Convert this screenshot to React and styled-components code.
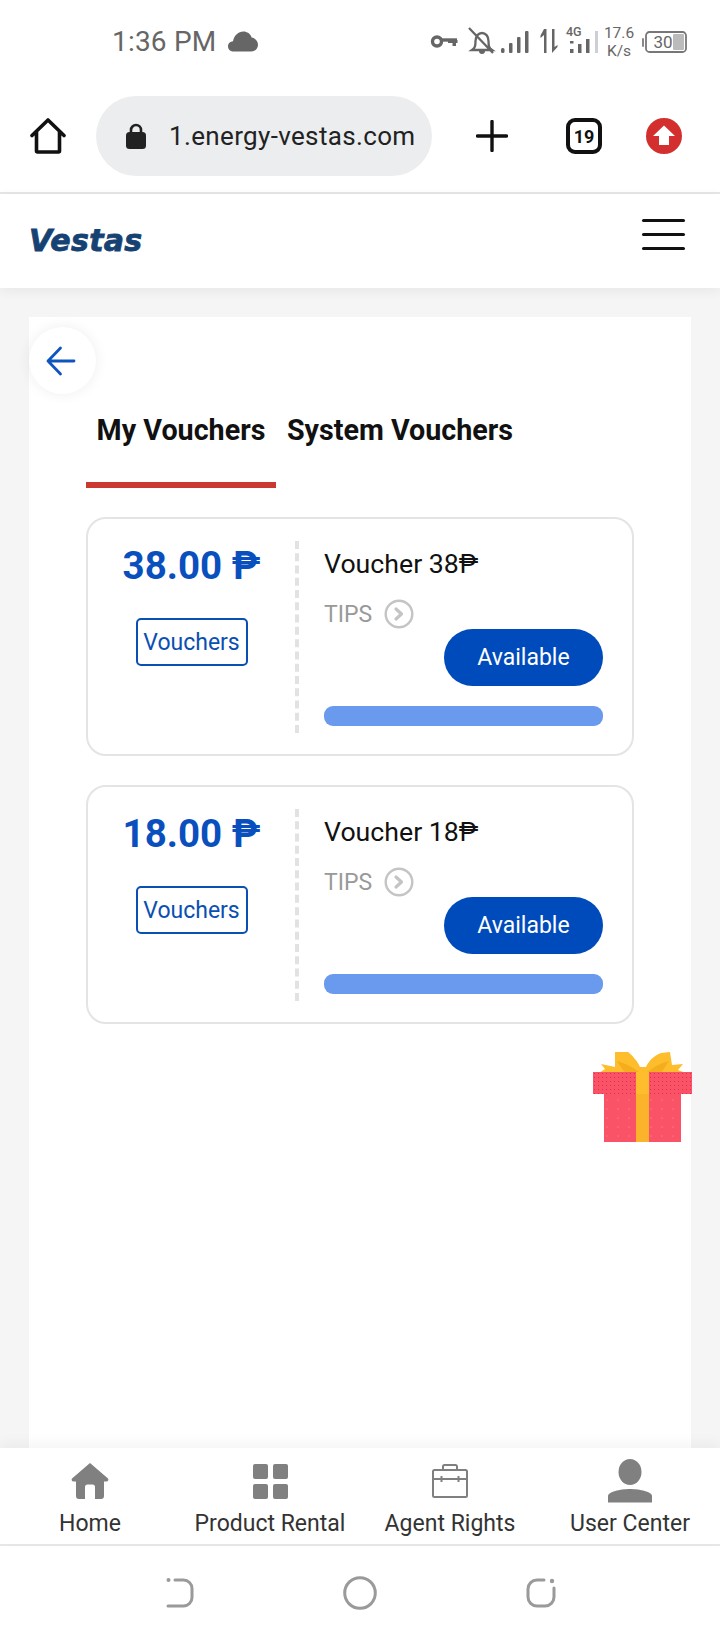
import React from "react";
import styled, { createGlobalStyle } from "styled-components";

const GlobalStyle = createGlobalStyle`
  html, body {
    margin: 0;
    padding: 0;
    background: #fff;
    font-family: Roboto, "Liberation Sans", sans-serif;
  }
  * { box-sizing: border-box; }
`;

const Page = styled.div`
  width: 720px;
  height: 1640px;
  display: flex;
  flex-direction: column;
  overflow: hidden;
  background: #fff;
`;

const StatusBar = styled.div`
  height: 96px;
  flex: none;
  display: flex;
  align-items: center;
  justify-content: space-between;
  padding: 0 33px 13px 112px;
  color: #666;
`;
const StatusLeft = styled.div`
  display: flex;
  align-items: center;
  gap: 12px;
`;
const Clock = styled.span`
  font-size: 28px;
  line-height: 34px;
  letter-spacing: 0.2px;
`;
const StatusRight = styled.div`
  display: flex;
  align-items: center;
`;
const Speed = styled.div`
  font-size: 15.5px;
  line-height: 18px;
  text-align: center;
  width: 32px;
  margin-right: 7px;
  color: #666;
`;
const Battery = styled.div`
  width: 45px;
  height: 22px;
  position: relative;
  display: flex;
  align-items: center;
  justify-content: center;
`;
const BatteryLabel = styled.span`
  font-size: 17px;
  margin-left: -3px;
  color: #666;
  position: relative;
`;
const BatteryOutline = styled.svg`
  position: absolute;
  inset: 0;
`;

const Toolbar = styled.div`
  height: 98px;
  flex: none;
  display: flex;
  align-items: flex-start;
  border-bottom: 2px solid #e6e6e6;
`;
const ToolSlot = styled.div`
  width: ${(p) => p.$w}px;
  height: 80px;
  flex: none;
  display: flex;
  align-items: center;
  justify-content: center;
`;
const UrlPill = styled.div`
  width: 336px;
  height: 80px;
  flex: none;
  border-radius: 40px;
  background: #ebedef;
  display: flex;
  align-items: center;
  padding-left: 30px;
  gap: 23px;
`;
const UrlText = styled.span`
  font-size: 26px;
  color: #222;
  letter-spacing: 0.35px;
  white-space: nowrap;
`;
const TabCount = styled.div`
  width: 36px;
  height: 36px;
  border: 4px solid #111;
  border-radius: 9px;
  display: flex;
  align-items: center;
  justify-content: center;
  font-size: 18px;
  font-weight: 700;
  color: #111;
`;

const Header = styled.header`
  height: 94px;
  flex: none;
  display: flex;
  align-items: center;
  justify-content: space-between;
  padding: 0 35px 0 29px;
  background: #fff;
  box-shadow: 0 3px 12px rgba(0, 0, 0, 0.06);
  position: relative;
  z-index: 2;
`;
const Logo = styled.span`
  font-family: "DejaVu Sans", sans-serif;
  font-style: italic;
  font-weight: 700;
  font-size: 30px;
  line-height: 36px;
  letter-spacing: 0.3px;
  color: #164273;
  -webkit-text-stroke: 0.8px #164273;
`;
const Burger = styled.div`
  width: 43px;
  display: flex;
  flex-direction: column;
  gap: 11px;
  margin-top: -14px;
  span {
    display: block;
    height: 3px;
    border-radius: 2px;
    background: #111;
  }
`;

const Main = styled.main`
  flex: 1;
  min-height: 0;
  background: #f5f5f5;
  padding: 29px 29px 0;
  overflow: hidden;
`;
const Panel = styled.section`
  position: relative;
  width: 662px;
  height: 100%;
  background: #fff;
  padding: 63px 57px 0;
`;
const BackButton = styled.div`
  position: absolute;
  left: 0;
  top: 10px;
  width: 67px;
  height: 67px;
  border-radius: 50%;
  background: #fff;
  box-shadow: 0 0 14px rgba(0, 0, 0, 0.07);
  display: flex;
  align-items: center;
  justify-content: center;
  padding-right: 4px;
`;
const Tabs = styled.div`
  display: flex;
`;
const Tab = styled.div`
  width: ${(p) => p.$w}px;
  height: 108px;
  line-height: 100px;
  font-size: 28.7px;
  font-weight: 700;
  color: #111;
  text-align: center;
  white-space: nowrap;
  border-bottom: 6px solid ${(p) => (p.$active ? "#cb3832" : "transparent")};
`;
const CardList = styled.div`
  margin-top: 29px;
  display: flex;
  flex-direction: column;
  gap: 29px;
`;
const Card = styled.article`
  width: 548px;
  height: 239px;
  border: 2px solid #e4e4e4;
  border-radius: 20px;
  padding: 22px 0 21px;
  display: flex;
  background: #fff;
`;
const Amount = styled.div`
  width: 207px;
  flex: none;
  display: flex;
  flex-direction: column;
  align-items: center;
`;
const Price = styled.div`
  font-size: 38.5px;
  line-height: 44px;
  font-weight: 700;
  color: #0a4fbe;
  white-space: nowrap;
  margin-top: 3px;
`;
const Tag = styled.div`
  margin-top: 30px;
  width: 112px;
  height: 48px;
  border: 2px solid #0a4fb2;
  border-radius: 5px;
  display: flex;
  align-items: center;
  justify-content: center;
  font-size: 23px;
  color: #0a4fb2;
`;
const Details = styled.div`
  flex: 1;
  border-left: 4px dashed #e2e2e2;
  padding: 0 29px 0 25px;
  display: flex;
  flex-direction: column;
`;
const Title = styled.div`
  font-size: 26.7px;
  line-height: 44px;
  color: #111;
  white-space: nowrap;
  margin-top: 1px;
`;
const TipsRow = styled.div`
  margin-top: 13px;
  height: 30px;
  display: flex;
  align-items: center;
  gap: 12px;
  font-size: 23px;
  color: #999;
`;
const ClaimButton = styled.div`
  align-self: flex-end;
  width: 159px;
  height: 57px;
  border-radius: 29px;
  background: #004bbb;
  color: #fff;
  font-size: 23px;
  display: flex;
  align-items: center;
  justify-content: center;
`;
const ProgressBar = styled.div`
  margin-top: 20px;
  height: 20px;
  border-radius: 9px;
  background: #6a9aee;
`;
const GiftIcon = styled.svg`
  position: absolute;
  left: 564px;
  top: 735px;
`;

const BottomNav = styled.nav`
  height: 98px;
  flex: none;
  display: grid;
  grid-template-columns: repeat(4, 1fr);
  background: #fff;
  border-bottom: 2px solid #e6e6e6;
  box-shadow: 0 -6px 12px rgba(0, 0, 0, 0.04);
  position: relative;
`;
const NavItem = styled.div`
  display: flex;
  flex-direction: column;
  align-items: center;
  font-size: 23px;
  color: #333;
  white-space: nowrap;
`;
const NavIcon = styled.div`
  height: 60px;
  display: flex;
  align-items: center;
  justify-content: center;
  padding-top: 6px;
`;
const NavLabel = styled.span`
  line-height: 32px;
`;
const SystemBar = styled.div`
  height: 94px;
  flex: none;
  display: flex;
  align-items: center;
  justify-content: center;
  gap: 149px;
  padding-left: 1px;
`;

const Cloud = () => (
  <svg width="30" height="21" viewBox="0 0 30 21">
    <path fill="#666" d="M6 20.5C2.5 20.5 0 18.3 0 15.4c0-2.8 2.2-4.9 5-5.1C6.100 4.300 10.500.5 15.300.5c3.900 0 7.200 2.300 8.300 5.900 3.500.6 6.400 3.500 6.400 7.300 0 3.900-3 6.800-6.700 6.800z" />
  </svg>
);
const StatusIcons = () => (
  <svg width="173" height="36" viewBox="0 -2 173 36" fill="none">
    <g stroke="#666" strokeWidth="3.400">
      <circle cx="7" cy="15.500" r="4.500" />
      <path d="M12 14h15" />
    </g>
    <path fill="#666" d="M18 14h9.500v3H26v3h-3.500v-3H18z" />
    <path stroke="#666" strokeWidth="2.300" d="M42 24h20c-3-2-3.500-4-3.500-9 0-5-3-8-6.500-8s-6.500 3-6.500 8c0 5-.5 7-3.500 9zM39 2l24 25" />
    <path fill="#666" d="M49 25h6a3 3 0 0 1-6 0z" />
    <g fill="#666">
      <rect x="71" y="22" width="3.500" height="5" rx="1.500" />
      <rect x="79" y="17" width="3.500" height="10" rx="1" />
      <rect x="87" y="11" width="3.500" height="16" rx="1" />
      <rect x="95" y="5" width="3.500" height="22" rx="1" />
      <path d="M114 3h2.500v24H114V9l-3.500 3v-2.500zM122 3h2.500v18l3-2v2l-5.500 6z" />
      <rect x="140" y="23" width="3.500" height="4" />
      <rect x="148" y="18" width="3.500" height="9" />
      <rect x="156" y="13" width="3.500" height="14" />
      <rect x="140" y="15" width="3.500" height="2.500" />
    </g>
    <rect x="165" y="5" width="3" height="22" fill="#ccd0d6" />
    <text x="136" y="10" fontFamily="Roboto, sans-serif" fontSize="12.500" fontWeight="500" fill="#666">4G</text>
  </svg>
);
const HomeOutline = () => (
  <svg width="36" height="36" viewBox="0 0 36 36" fill="none" stroke="#111" strokeWidth="3.600" strokeLinejoin="round" strokeLinecap="round">
    <path d="M2 17.500 18 2l16 15.500M6.500 14v19a1 1 0 0 0 1 1h21a1 1 0 0 0 1-1V14" />
  </svg>
);
const Lock = () => (
  <svg width="20" height="26" viewBox="0 0 20 26">
    <path fill="none" stroke="#222" strokeWidth="2.600" d="M5 10V7a5 5 0 0 1 10 0v3" />
    <rect y="9" width="20" height="17" rx="3.500" fill="#222" />
  </svg>
);
const Plus = () => (
  <svg width="32" height="32" viewBox="0 0 32 32" stroke="#111" strokeWidth="3.400" strokeLinecap="round">
    <path d="M16 1.500v29M1.500 16h29" />
  </svg>
);
const UploadBadge = () => (
  <svg width="36" height="36" viewBox="0 0 36 36">
    <circle cx="18" cy="18" r="18" fill="#d32f2f" />
    <path fill="#fff" d="M18 7.500 29 18h-6v9H13v-9H7z" />
  </svg>
);
const BackArrow = () => (
  <svg width="30" height="30" viewBox="0 0 30 30" fill="none" stroke="#0f55c0" strokeWidth="2.800" strokeLinecap="round" strokeLinejoin="round">
    <path d="M28 15H2M14.500 2 2 15l12.500 13" />
  </svg>
);
const TipsIcon = () => (
  <svg width="30" height="30" viewBox="0 0 30 30" fill="none" stroke="#c4c4c4">
    <circle cx="15" cy="15" r="13.300" strokeWidth="2.400" />
    <path d="m12 10 5.500 5-5.500 5" strokeWidth="3.200" strokeLinecap="round" strokeLinejoin="round" />
  </svg>
);
const Gift = () => (
  <GiftIcon width="100" height="90" viewBox="0 0 100 90">
    <defs>
      <pattern id="lidDots" width="4" height="4" patternUnits="userSpaceOnUse">
        <circle cx="1.500" cy="1.500" r="0.600" fill="#d8284c" />
      </pattern>
      <pattern id="boxDots" width="11" height="9" patternUnits="userSpaceOnUse">
        <circle cx="3" cy="3" r="0.600" fill="#ff9aa0" />
      </pattern>
    </defs>
    <path fill="#fdbd2c" d="M8 12 22 15 22 0H35C40 4 45 10 47 15H53C55 10 60 4 68 1L77 0 79 13 90 12 85 18 93 21H6L12 17z" />
    <path fill="#f5ad1e" d="M24 9C32 11 40 15 47 21H32zM76 9C68 11 60 15 53 21H68z" />
    <rect x="11" y="41" width="77" height="49" fill="#fa5367" />
    <rect x="11" y="41" width="77" height="49" fill="url(#boxDots)" />
    <rect y="20" width="99" height="22" fill="#fa5367" />
    <rect y="20" width="99" height="22" fill="url(#lidDots)" />
    <rect x="43" y="20" width="13" height="22" fill="#fdbd2c" />
    <rect x="43" y="42" width="13" height="48" fill="#fab32a" />
  </GiftIcon>
);
const HomeSolid = () => (
  <svg width="38" height="36" viewBox="0 0 38 36">
    <path fill="#808080" d="M19 0 37 15.500c1 1.500 0 3-1.500 3H33V33a3 3 0 0 1-3 3h-6V24a2.500 2.500 0 0 0-2.500-2.500h-5A2.500 2.500 0 0 0 14 24v12H8a3 3 0 0 1-3-3V18.500H2.500C1 18.500 0 17 1 15.500z" />
  </svg>
);
const Grid = () => (
  <svg width="35" height="35" viewBox="0 0 35 35" fill="#808080">
    <rect width="15" height="15" rx="2" />
    <rect x="20" width="15" height="15" rx="2" />
    <rect y="20" width="15" height="15" rx="2" />
    <rect x="20" y="20" width="15" height="15" rx="2" />
  </svg>
);
const Briefcase = () => (
  <svg width="36" height="34" viewBox="0 0 36 34" fill="none" stroke="#808080" strokeWidth="2">
    <rect x="1" y="6" width="34" height="27" rx="1.500" />
    <path d="M11 6V2.500A1.500 1.500 0 0 1 12.500 1h11A1.500 1.500 0 0 1 25 2.500V6M1 15h34M9.500 12v6M26.500 12v6" />
  </svg>
);
const User = () => (
  <svg width="44" height="44" viewBox="0 0 44 44" fill="#808080">
    <ellipse cx="22" cy="13" rx="11.500" ry="13" />
    <path d="M0 43.500V37c0-4 12-7 22-7s22 3 22 7v6.500z" />
  </svg>
);
const SysBack = () => (
  <svg width="28" height="30" viewBox="0 0 28 30" fill="none" stroke="#9a9a9a" strokeWidth="3" strokeLinecap="round">
    <path d="M9 2h8.500a8.500 8.500 0 0 1 8.500 8.500v9a8.500 8.500 0 0 1-8.500 8.500H2" />
    <circle cx="2.500" cy="2" r="2" fill="#9a9a9a" stroke="none" />
  </svg>
);
const SysHome = () => (
  <svg width="34" height="34" viewBox="0 0 34 34" fill="none" stroke="#9a9a9a" strokeWidth="3">
    <circle cx="17" cy="17" r="15.300" />
  </svg>
);
const SysRecent = () => (
  <svg width="30" height="30" viewBox="0 0 30 30" fill="none" stroke="#9a9a9a" strokeWidth="3" strokeLinecap="round">
    <path d="M18 2h-7a9 9 0 0 0-9 9v8a9 9 0 0 0 9 9h8a9 9 0 0 0 9-9v-9" />
    <circle cx="26" cy="3" r="2.200" fill="#9a9a9a" stroke="none" />
  </svg>
);

const vouchers = [
  { id: 1, price: "38.00 ₱", title: "Voucher 38₱" },
  { id: 2, price: "18.00 ₱", title: "Voucher 18₱" },
];

const navItems = [
  { label: "Home", icon: <HomeSolid /> },
  { label: "Product Rental", icon: <Grid /> },
  { label: "Agent Rights", icon: <Briefcase /> },
  { label: "User Center", icon: <User /> },
];

export default function App() {
  return (
    <Page>
      <GlobalStyle />
      <StatusBar>
        <StatusLeft>
          <Clock>1:36 PM</Clock>
          <Cloud />
        </StatusLeft>
        <StatusRight>
          <StatusIcons />
          <Speed>
            17.6
            <br />
            K/s
          </Speed>
          <Battery>
            <BatteryOutline width="45" height="22" viewBox="0 0 45 22" fill="none">
              <rect x="0" y="7" width="2" height="9" rx="1" fill="#888" />
              <rect x="4" y="1" width="40" height="20" rx="3.500" stroke="#777" strokeWidth="1.800" />
              <rect x="31" y="3" width="11" height="16" rx="1" fill="#bbb" />
            </BatteryOutline>
            <BatteryLabel>30</BatteryLabel>
          </Battery>
        </StatusRight>
      </StatusBar>

      <Toolbar>
        <ToolSlot $w={96}>
          <HomeOutline />
        </ToolSlot>
        <UrlPill>
          <Lock />
          <UrlText>1.energy-vestas.com</UrlText>
        </UrlPill>
        <ToolSlot $w={120}>
          <Plus />
        </ToolSlot>
        <ToolSlot $w={64}>
          <TabCount>19</TabCount>
        </ToolSlot>
        <ToolSlot $w={96}>
          <UploadBadge />
        </ToolSlot>
      </Toolbar>

      <Header>
        <Logo>Vestas</Logo>
        <Burger>
          <span />
          <span />
          <span />
        </Burger>
      </Header>

      <Main>
        <Panel>
          <BackButton>
            <BackArrow />
          </BackButton>
          <Tabs>
            <Tab $w={190} $active>
              My Vouchers
            </Tab>
            <Tab $w={248}>System Vouchers</Tab>
          </Tabs>
          <CardList>
            {vouchers.map((v) => (
              <Card key={v.id}>
                <Amount>
                  <Price>{v.price}</Price>
                  <Tag>Vouchers</Tag>
                </Amount>
                <Details>
                  <Title>{v.title}</Title>
                  <TipsRow>
                    TIPS
                    <TipsIcon />
                  </TipsRow>
                  <ClaimButton>Available</ClaimButton>
                  <ProgressBar />
                </Details>
              </Card>
            ))}
          </CardList>
          <Gift />
        </Panel>
      </Main>

      <BottomNav>
        {navItems.map((item) => (
          <NavItem key={item.label}>
            <NavIcon>{item.icon}</NavIcon>
            <NavLabel>{item.label}</NavLabel>
          </NavItem>
        ))}
      </BottomNav>
      <SystemBar>
        <SysBack />
        <SysHome />
        <SysRecent />
      </SystemBar>
    </Page>
  );
}
